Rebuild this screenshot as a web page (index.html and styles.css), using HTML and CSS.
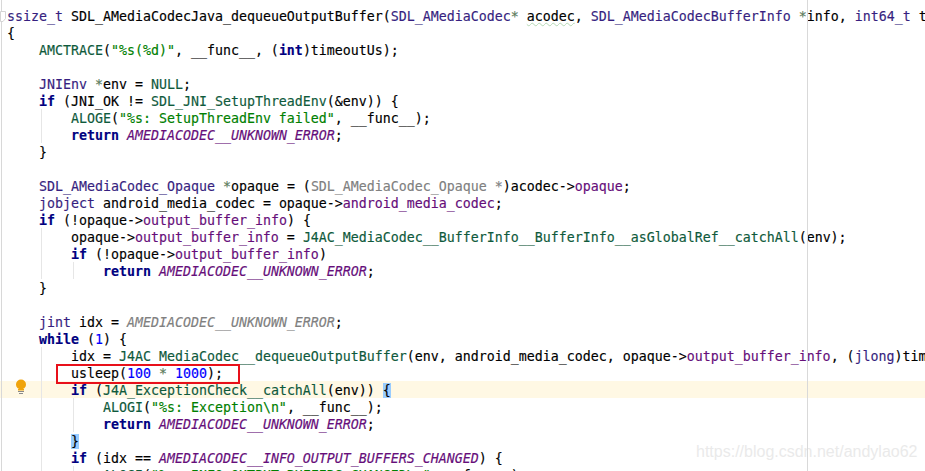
FILE: index.html
```html
<!DOCTYPE html>
<html lang="en">
<head>
<meta charset="utf-8">
<title>SDL_AMediaCodecJava_dequeueOutputBuffer</title>
<link rel="stylesheet" href="styles.css">
</head>
<body>
<main class="editor">
<div class="gutter-line"></div>
<div class="margin-line"></div>
<svg class="fold" width="7" height="11" viewBox="0 0 7 11" aria-hidden="true">
<path d="M0.5 0.5H5.5V7.5L3 10.5H0.5Z" fill="#fff" stroke="#d4d4d4"/>
</svg>
<div class="code">
<div class="line"><span class="ty">ssize_t</span> SDL_AMediaCodecJava_dequeueOutputBuffer(<span class="ty">SDL_AMediaCodec</span><span class="st">*</span> <span class="warn">acodec</span>, <span class="ty">SDL_AMediaCodecBufferInfo</span> <span class="st">*</span>info, <span class="ty">int64_t</span> timeoutUs)</div>
<div class="line">{</div>
<div class="line">    <span class="mc">AMCTRACE</span>(<span class="str">"%s(%d)"</span>, __func__, (<span class="kw">int</span>)timeoutUs);</div>
<div class="line"> </div>
<div class="line">    <span class="ty">JNIEnv</span> <span class="st">*</span>env = <span class="mc">NULL</span>;</div>
<div class="line">    <span class="kw">if</span> (JNI_OK != <span class="mc">SDL_JNI_SetupThreadEnv</span>(&amp;env)) {</div>
<div class="line g1">        <span class="mc">ALOGE</span>(<span class="str">"%s: SetupThreadEnv failed"</span>, __func__);</div>
<div class="line g1">        <span class="kw">return</span> <span class="en">AMEDIACODEC__UNKNOWN_ERROR</span>;</div>
<div class="line">    }</div>
<div class="line"> </div>
<div class="line">    <span class="ty">SDL_AMediaCodec_Opaque</span> <span class="st">*</span>opaque = (<span class="dim">SDL_AMediaCodec_Opaque *</span>)acodec-&gt;<span class="fd">opaque</span>;</div>
<div class="line">    <span class="ty">jobject</span> android_media_codec = opaque-&gt;<span class="fd">android_media_codec</span>;</div>
<div class="line">    <span class="kw">if</span> (!opaque-&gt;<span class="fd">output_buffer_info</span>) {</div>
<div class="line g1">        opaque-&gt;<span class="fd">output_buffer_info</span> = <span class="mc">J4AC_MediaCodec__BufferInfo__BufferInfo__asGlobalRef__catchAll</span>(env);</div>
<div class="line g1">        <span class="kw">if</span> (!opaque-&gt;<span class="fd">output_buffer_info</span>)</div>
<div class="line g12">            <span class="kw">return</span> <span class="en">AMEDIACODEC__UNKNOWN_ERROR</span>;</div>
<div class="line">    }</div>
<div class="line"> </div>
<div class="line">    <span class="ty">jint</span> idx = <span class="en-dim">AMEDIACODEC__UNKNOWN_ERROR</span>;</div>
<div class="line">    <span class="kw">while</span> (<span class="num">1</span>) {</div>
<div class="line g1">        idx = <span class="mc">J4AC_MediaCodec__dequeueOutputBuffer</span>(env, android_media_codec, opaque-&gt;<span class="fd">output_buffer_info</span>, (<span class="ty">jlong</span>)timeoutUs);</div>
<div class="line g1">        usleep(<span class="num">100</span> <span class="st">*</span> <span class="num">1000</span>);</div>
<div class="line g1 cur">        <span class="kw">if</span> (<span class="mc">J4A_ExceptionCheck__catchAll</span>(env)) <span class="match">{</span></div>
<div class="line g12">            <span class="mc">ALOGI</span>(<span class="str">"%s: Exception\n"</span>, __func__);</div>
<div class="line g12">            <span class="kw">return</span> <span class="en">AMEDIACODEC__UNKNOWN_ERROR</span>;</div>
<div class="line g1">        <span class="match">}</span></div>
<div class="line g1">        <span class="kw">if</span> (idx == <span class="en">AMEDIACODEC__INFO_OUTPUT_BUFFERS_CHANGED</span>) {</div>
<div class="line g12">            <span class="mc">ALOGI</span>(<span class="str">"%s: INFO_OUTPUT_BUFFERS_CHANGED\n"</span>, __func__);</div>
</div>
<div class="redbox"></div>
<svg class="bulb" width="14" height="16" viewBox="0 0 14 16" aria-hidden="true">
<circle cx="7" cy="5.5" r="5" fill="#f0a30a"/>
<rect x="4" y="10" width="6" height="1.5" fill="#f0a30a"/>
<rect x="4" y="12" width="6" height="1" fill="#8a8a8a"/>
<rect x="5" y="14" width="4" height="1" fill="#8a8a8a"/>
</svg>
<div class="watermark">https://blog.csdn.net/andylao62</div>
</main>
</body>
</html>
```

FILE: styles.css
```css
html, body {
  margin: 0;
  padding: 0;
  background: #fff;
}
.editor {
  position: relative;
  width: 925px;
  height: 471px;
  overflow: hidden;
  background: #fff;
}
.code {
  padding-top: 7px;
  font-family: "DejaVu Sans Mono", monospace;
  font-size: 13.29px;
  color: #000;
  -webkit-text-stroke: 0.15px currentColor;
}
.line {
  height: 17px;
  line-height: 19px;
  padding-left: 7px;
  white-space: pre;
}
.g1 {
  background: linear-gradient(#e6e6e6, #e6e6e6) 41px 0 / 1px 100% no-repeat;
}
.g12 {
  background:
    linear-gradient(#e6e6e6, #e6e6e6) 41px 0 / 1px 100% no-repeat,
    linear-gradient(#e6e6e6, #e6e6e6) 73px 0 / 1px 100% no-repeat;
}
.cur {
  background-color: #fff8e4;
}
.kw { color: #000080; font-weight: bold; }
.ty { color: #371f80; }
.st { color: #5a7a5a; }
.mc { color: #0f5a3c; }
.str { color: #008000; }
.en { color: #660e7a; font-style: italic; }
.en-dim { color: #808080; font-style: italic; }
.fd { color: #660e7a; }
.dim { color: #808080; }
.num { color: #0000ff; }
.match { background: #99ccff; }
.warn {
  text-decoration: underline wavy #b4d8b4 1px;
}
.gutter-line {
  position: absolute;
  left: 1px;
  top: 0;
  width: 1px;
  height: 100%;
  background: #d8d8d8;
}
.fold {
  position: absolute;
  left: 0;
  top: 11px;
}
.margin-line {
  position: absolute;
  left: 807px;
  top: 0;
  width: 1px;
  height: 100%;
  background: #d9d9d9;
  z-index: 1;
}
.redbox {
  position: absolute;
  left: 56px;
  top: 364px;
  width: 180px;
  height: 16px;
  border: 2px solid #e8101a;
}
.bulb {
  position: absolute;
  left: 14px;
  top: 379px;
}
.watermark {
  position: absolute;
  left: 696px;
  top: 442px;
  font-family: "Liberation Sans", Arial, sans-serif;
  font-size: 16px;
  line-height: 20px;
  color: #eaeaea;
  white-space: nowrap;
}
```
